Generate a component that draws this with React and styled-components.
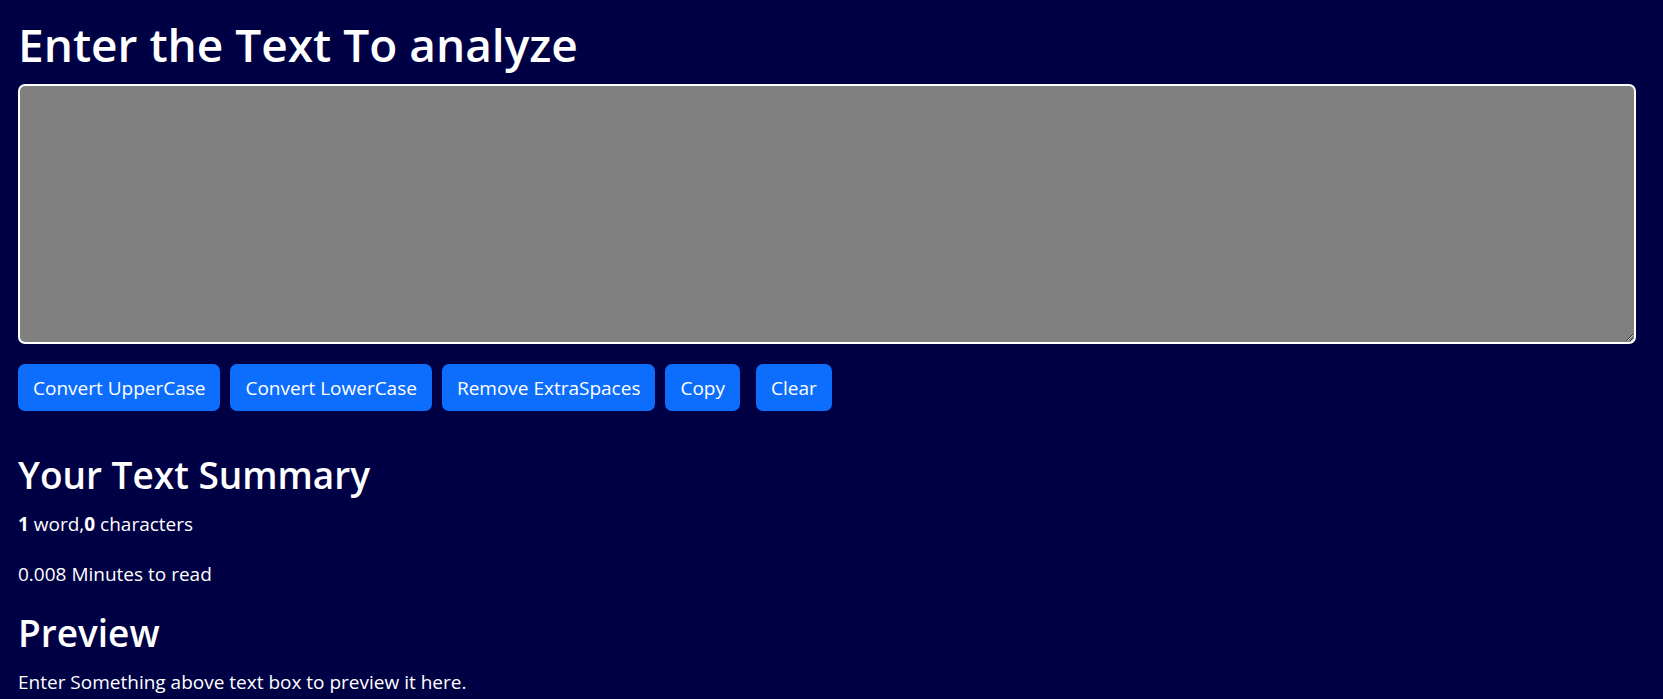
import React, { useState } from 'react';
import styled, { createGlobalStyle } from 'styled-components';

const GlobalStyle = createGlobalStyle`
  body {
    margin: 0;
    background-color: #000045;
    color: white;
    font-family: "Open Sans", "Noto Sans", sans-serif;
  }
`;

const Page = styled.div`
  padding: 14px 27px 0 18px;
`;

const Title = styled.h1`
  font-size: 46px;
  font-weight: 600;
  line-height: 60px;
  margin: 0 0 10px;
`;

const TextBox = styled.textarea`
  display: block;
  box-sizing: border-box;
  width: 100%;
  height: 260px;
  background-color: grey;
  color: white;
  border: 2.5px solid white;
  border-radius: 7px;
  padding: 8px 15px;
  font-size: 19px;
  font-family: inherit;
  outline: none;
`;

const ButtonRow = styled.div`
  display: flex;
  gap: 10px;
  margin-top: 20px;
`;

const ActionButton = styled.button`
  height: 47px;
  padding: 0 15px;
  margin-left: ${(p) => (p.$extra ? '6px' : '0')};
  background-color: #0d6efd;
  color: white;
  border: none;
  border-radius: 7px;
  font-family: inherit;
  font-size: 19px;
  cursor: pointer;
`;

const Section = styled.div`
  margin-top: 40px;
`;

const Heading = styled.h2`
  font-size: 37px;
  font-weight: 600;
  line-height: 48px;
  margin: 0 0 10px;
`;

const Line = styled.p`
  font-size: 19px;
  line-height: 30px;
  margin: 0 0 20px;
`;

export default function App() {
  const [text, setText] = useState('');
  const words = text.split(' ').length;

  return (
    <Page>
      <GlobalStyle />
      <Title>Enter the Text To analyze</Title>
      <TextBox value={text} onChange={(e) => setText(e.target.value)} />
      <ButtonRow>
        <ActionButton onClick={() => setText(text.toUpperCase())}>Convert UpperCase</ActionButton>
        <ActionButton onClick={() => setText(text.toLowerCase())}>Convert LowerCase</ActionButton>
        <ActionButton onClick={() => setText(text.split(/[ ]+/).join(' '))}>Remove ExtraSpaces</ActionButton>
        <ActionButton>Copy</ActionButton>
        <ActionButton $extra onClick={() => setText('')}>Clear</ActionButton>
      </ButtonRow>
      <Section>
        <Heading>Your Text Summary</Heading>
        <Line>
          <b>{words}</b> word,<b>{text.length}</b> characters
        </Line>
        <Line>{0.008 * words} Minutes to read</Line>
        <Heading>Preview</Heading>
        <Line>{text.length > 0 ? text : 'Enter Something above text box to preview it here.'}</Line>
      </Section>
    </Page>
  );
}
